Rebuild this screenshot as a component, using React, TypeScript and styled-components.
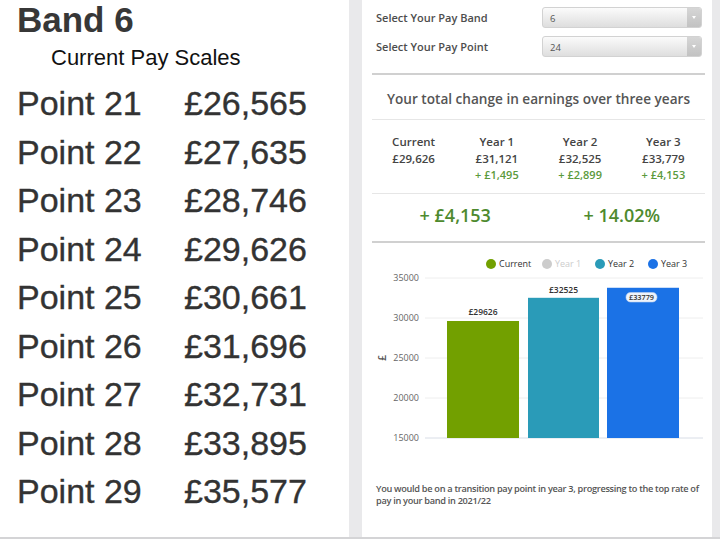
import React from 'react';
import styled, { createGlobalStyle } from 'styled-components';

const Global = createGlobalStyle`
  html, body { margin: 0; padding: 0; background: #e9e9eb; }
  body { width: 720px; height: 539px; overflow: hidden; }
`;

const Page = styled.div`
  display: flex;
  width: 720px;
  height: 537px;
  background: #e9e9eb;
  border-bottom: 2px solid #d4d4d6;
`;

const ScalePanel = styled.section`
  width: 349px;
  flex: none;
  background: #ffffff;
  padding-left: 17px;
  box-sizing: border-box;
  font-family: "Liberation Sans", Arial, sans-serif;
  color: #333;
`;

const BandTitle = styled.h1`
  margin: 0;
  font-size: 35px;
  line-height: 40px;
  font-weight: 700;
  color: #373737;
`;

const ScaleCaption = styled.h2`
  margin: 5px 0 0 34px;
  font-size: 22px;
  line-height: 26px;
  font-weight: 400;
  color: #111;
`;

const ScaleGrid = styled.div`
  margin-top: 8px;
  display: grid;
  grid-template-columns: 167px auto;
  grid-auto-rows: 48.5px;
  font-size: 34px;
  line-height: 48.5px;
  color: #333;
  -webkit-text-stroke: 0.35px #333;
`;

const Gutter = styled.div`
  width: 13px;
  flex: none;
`;

const Card = styled.section`
  width: 350px;
  flex: none;
  background: #ffffff;
  box-sizing: border-box;
  padding: 7px 7px 0 10px;
  display: flex;
  flex-direction: column;
  font-family: "Open Sans", "Noto Sans", sans-serif;
  color: #555;
`;

const FormRow = styled.div`
  display: flex;
  align-items: center;
  height: 21px;
  & + & { margin-top: 8px; }
`;

const FieldLabel = styled.label`
  width: 170px;
  flex: none;
  box-sizing: border-box;
  padding-left: 4px;
  font-size: 11px;
  font-weight: 600;
  color: #4d4d4d;
`;

const SelectBox = styled.div`
  width: 160px;
  height: 21px;
  box-sizing: border-box;
  display: flex;
  border: 1px solid #d2d2d2;
  border-radius: 3px;
  background: linear-gradient(#fbfbfb, #dedede);
  overflow: hidden;
`;

const SelectValue = styled.span`
  flex: 1;
  padding: 3px 0 0 7px;
  font-size: 9.5px;
  line-height: 16px;
  color: #555;
`;

const SelectArrow = styled.span`
  width: 14px;
  flex: none;
  background: linear-gradient(#d6d6d6, #c2c2c2);
  display: flex;
  align-items: center;
  justify-content: center;
  &::after {
    content: "";
    border-left: 2.5px solid transparent;
    border-right: 2.5px solid transparent;
    border-top: 3px solid #fff;
  }
`;

const Rule = styled.hr<{ $thick?: boolean }>`
  margin: 0;
  border: none;
  height: ${p => (p.$thick ? '2px' : '1px')};
  background: ${p => (p.$thick ? '#d0d0d0' : '#e6e6e6')};
`;

const TopRule = styled(Rule)`
  margin-top: 16px;
`;

const SectionTitle = styled.h3`
  margin: 0;
  padding: 14px 0 10px;
  text-align: center;
  font-size: 13.6px;
  line-height: 20px;
  font-weight: 600;
  color: #555;
`;

const YearGrid = styled.div`
  display: grid;
  grid-template-columns: repeat(4, 1fr);
  padding: 13px 0 11px;
  text-align: center;
`;

const YearCol = styled.div`
  display: flex;
  flex-direction: column;
`;

const YearHead = styled.span`
  font-size: 11.5px;
  line-height: 17px;
  font-weight: 600;
  color: #444;
`;

const YearValue = styled.span`
  font-size: 11.5px;
  line-height: 17px;
  font-weight: 600;
  color: #444;
`;

const YearDelta = styled.span`
  font-size: 11px;
  line-height: 15px;
  font-weight: 600;
  color: #5b9a3c;
`;

const Totals = styled.div`
  display: grid;
  grid-template-columns: 1fr 1fr;
  padding: 9px 0 14px;
  text-align: center;
`;

const TotalValue = styled.span`
  font-size: 18px;
  line-height: 24px;
  font-weight: 600;
  color: #4e8a2e;
`;

const Chart = styled.svg`
  display: block;
  width: 333px;
  height: 240px;
  font-family: "Open Sans", "Noto Sans", sans-serif;
`;

const Note = styled.p`
  margin: 0;
  padding-left: 4px;
  font-size: 9.2px;
  line-height: 12px;
  font-weight: 600;
  letter-spacing: -0.3px;
  color: #555;
`;

const scale = [
  ['Point 21', '£26,565'],
  ['Point 22', '£27,635'],
  ['Point 23', '£28,746'],
  ['Point 24', '£29,626'],
  ['Point 25', '£30,661'],
  ['Point 26', '£31,696'],
  ['Point 27', '£32,731'],
  ['Point 28', '£33,895'],
  ['Point 29', '£35,577'],
];

const years = [
  { head: 'Current', value: '£29,626', delta: '' },
  { head: 'Year 1', value: '£31,121', delta: '+ £1,495' },
  { head: 'Year 2', value: '£32,525', delta: '+ £2,899' },
  { head: 'Year 3', value: '£33,779', delta: '+ £4,153' },
];

const legend = [
  { label: 'Current', color: '#72a000', cx: 119, text: '#333' },
  { label: 'Year 1', color: '#cccccc', cx: 175, text: '#cccccc' },
  { label: 'Year 2', color: '#2a9bb8', cx: 228, text: '#333' },
  { label: 'Year 3', color: '#1b72e6', cx: 281, text: '#333' },
];

const ticks = [35000, 30000, 25000, 20000, 15000];
const yOf = (v: number) => 195 - ((v - 15000) / 5000) * 40;

const bars = [
  { x: 75, w: 72, v: 29626, color: '#72a000' },
  { x: 156, w: 71, v: 32525, color: '#2a9bb8' },
  { x: 235, w: 72, v: 33779, color: '#1b72e6' },
];

export default function App() {
  return (
    <>
      <Global />
      <Page>
        <ScalePanel>
          <BandTitle>Band 6</BandTitle>
          <ScaleCaption>Current Pay Scales</ScaleCaption>
          <ScaleGrid>
            {scale.map(([p, v]) => (
              <React.Fragment key={p}>
                <span>{p}</span>
                <span>{v}</span>
              </React.Fragment>
            ))}
          </ScaleGrid>
        </ScalePanel>
        <Gutter />
        <Card>
          <FormRow>
            <FieldLabel>Select Your Pay Band</FieldLabel>
            <SelectBox>
              <SelectValue>6</SelectValue>
              <SelectArrow />
            </SelectBox>
          </FormRow>
          <FormRow>
            <FieldLabel>Select Your Pay Point</FieldLabel>
            <SelectBox>
              <SelectValue>24</SelectValue>
              <SelectArrow />
            </SelectBox>
          </FormRow>
          <TopRule $thick />
          <SectionTitle>Your total change in earnings over three years</SectionTitle>
          <Rule />
          <YearGrid>
            {years.map(y => (
              <YearCol key={y.head}>
                <YearHead>{y.head}</YearHead>
                <YearValue>{y.value}</YearValue>
                <YearDelta>{y.delta || '\u00a0'}</YearDelta>
              </YearCol>
            ))}
          </YearGrid>
          <Rule />
          <Totals>
            <TotalValue>+ £4,153</TotalValue>
            <TotalValue>+ 14.02%</TotalValue>
          </Totals>
          <Rule $thick />
          <Chart viewBox="0 0 333 240">
            {legend.map(l => (
              <g key={l.label}>
                <circle cx={l.cx} cy={21} r={5} fill={l.color} />
                <text x={l.cx + 8} y={24} fontSize={9} fill={l.text}>{l.label}</text>
              </g>
            ))}
            {ticks.map(t => (
              <g key={t}>
                <line x1={53} x2={331} y1={yOf(t)} y2={yOf(t)} stroke={t === 15000 ? '#d8dde6' : '#eeeeee'} strokeWidth={1} />
                <text x={47} y={yOf(t) + 3} fontSize={9} fill="#666" textAnchor="end">{t}</text>
              </g>
            ))}
            <text x={0} y={0} fontSize={10} fontWeight={600} fill="#555" textAnchor="middle" transform="translate(14 115) rotate(-90)">£</text>
            {bars.map(b => (
              <rect key={b.x} x={b.x} y={yOf(b.v)} width={b.w} height={195 - yOf(b.v)} fill={b.color} />
            ))}
            <text x={111} y={72} fontSize={8.5} fontWeight={600} fill="#333" textAnchor="middle">£29626</text>
            <text x={191.5} y={50} fontSize={8.5} fontWeight={600} fill="#333" textAnchor="middle">£32525</text>
            <rect x={254} y={49.5} width={31} height={9.5} rx={4.5} fill="#eef3fb" stroke="#bcd0ee" strokeWidth={0.6} />
            <text x={269.5} y={57} fontSize={7.3} fontWeight={600} fill="#333" textAnchor="middle">£33779</text>
          </Chart>
          <Note>
            You would be on a transition pay point in year 3, progressing to the top rate of pay in your band in 2021/22
          </Note>
        </Card>
      </Page>
    </>
  );
}
